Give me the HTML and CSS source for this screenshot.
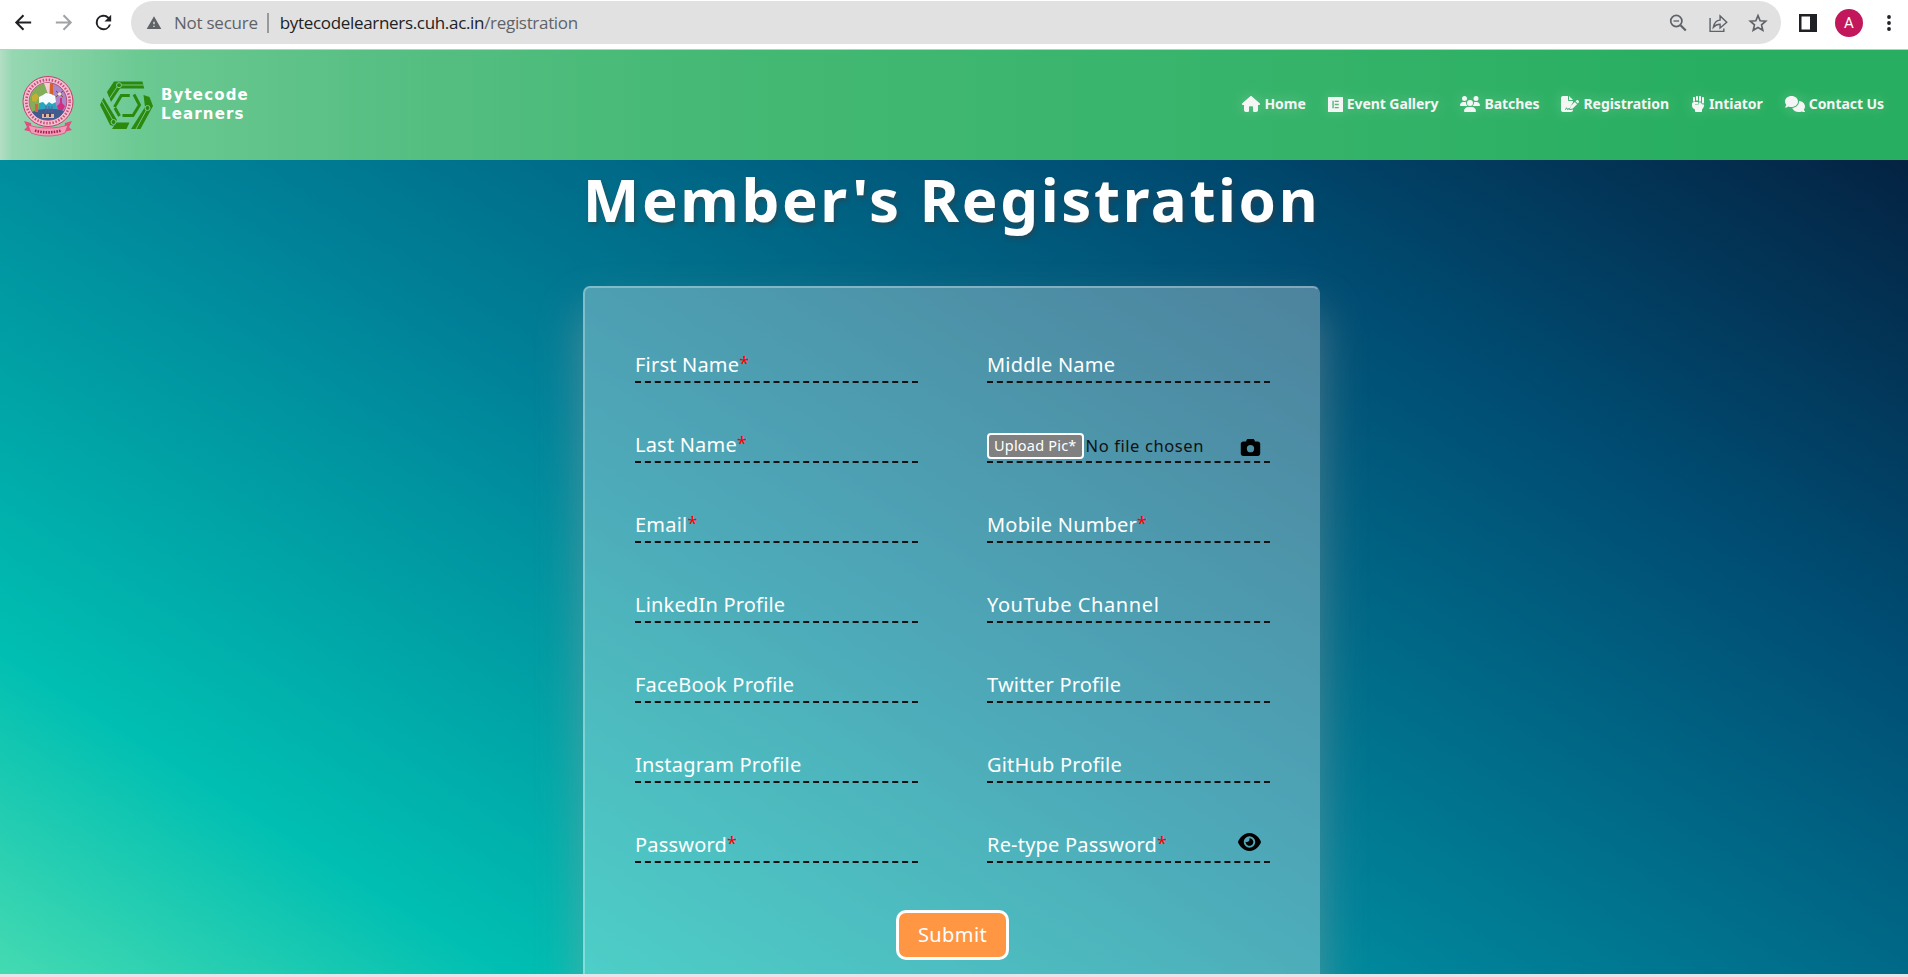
FILE: index.html
```
<!DOCTYPE html>
<html lang="en">
<head>
<meta charset="utf-8">
<title>Member's Registration</title>
<link rel="stylesheet" href="styles.css">
</head>
<body>
<header class="browser">
  <svg class="b-ico back" viewBox="0 0 24 24"><path d="M20 12H5M12 4.500L4.500 12l7.500 7.500" fill="none" stroke="#202124" stroke-width="2.100"/></svg>
  <svg class="b-ico fwd" viewBox="0 0 24 24"><path d="M4 12h15M12 4.500l7.500 7.500-7.500 7.500" fill="none" stroke="#a0a2a5" stroke-width="2.100"/></svg>
  <svg class="b-ico reload" viewBox="0 0 24 24"><path d="M17.650 6.350A8 8 0 1 0 19.730 14h-2.080A6 6 0 1 1 12 6c1.660 0 3.140.69 4.220 1.780L13 11h7V4z" fill="#202124"/></svg>
  <div class="omnibox">
    <svg class="warn" viewBox="0 0 24 24"><path fill-rule="evenodd" d="M1 21h22L12 2zm12-3h-2v-2h2zm0-4h-2v-4h2z" fill="#5f6368"/></svg>
    <span class="notsecure">Not secure</span><span class="bar"></span>
    <span class="url">bytecodelearners.cuh.ac.in<span class="path">/registration</span></span>
    <span class="grow"></span>
    <svg class="o-ico" viewBox="0 0 20 20"><g fill="none" stroke="#5f6368"><circle cx="8.300" cy="8" r="5.600" stroke-width="1.700"/><path d="M12.500 12.200l5.300 5.300" stroke-width="2.200"/><path d="M5.500 8h5.600" stroke-width="1.300"/></g></svg>
    <svg class="o-ico" viewBox="0 0 24 24"><path d="M2.500 6v16H19v-3.500M6.500 17c.8-4.500 3.500-8.500 8-8.500V3.500l8 7.500-8 7V13.500c-3.200 0-5.800 1-8 3.500z" fill="none" stroke="#5f6368" stroke-width="1.700"/></svg>
    <svg class="o-ico" viewBox="0 0 24 24"><path d="M12 3.200l2.600 6.100 6.700.6-5.050 4.400 1.500 6.500L12 17.400l-5.750 3.400 1.500-6.500L2.700 9.900l6.700-.6z" fill="none" stroke="#5f6368" stroke-width="2"/></svg>
  </div>
  <svg class="panel" viewBox="0 0 18 18"><path d="M0 0h18v18H0zM2.500 2.500v13H11v-13z" fill="#202124" fill-rule="evenodd"/></svg>
  <span class="avatar">A</span>
  <svg class="dots" viewBox="0 0 4 16"><circle cx="2" cy="2" r="1.900"/><circle cx="2" cy="8" r="1.900"/><circle cx="2" cy="14" r="1.900"/></svg>
</header>

<div class="site">
  <nav class="navbar">
    <svg class="crest" viewBox="0 0 54 62">
      <ellipse cx="26" cy="25.500" rx="25" ry="25" fill="#f3bfd0" stroke="#c43c6c" stroke-width="1"/>
      <ellipse cx="26" cy="25.500" rx="21.700" ry="21.700" fill="none" stroke="#b31e52" stroke-width="2.600" stroke-dasharray="1.500 1.600" stroke-opacity=".7"/>
      <circle cx="26" cy="25.500" r="18.800" fill="#ab86c9" stroke="#a33b6b" stroke-width=".8"/>
      <path d="M26 6.900a18.600 18.600 0 0 0-14 31l14-12z" fill="#82ad59"/>
      <path d="M22 7l5 14 1-14z" fill="#f6ccd8"/>
      <path d="M28 8h3v13h-3z" fill="#d2642b"/>
      <path d="M18 25h15l3 11H16z" fill="#28a6bd"/>
      <path d="M17 21l4-2 3-2 5 1 4 2 1 6-4 2-3-2-3 3-3-3-4 1z" fill="#f5fcff"/>
      <path d="M10 36c8-4 24-4 32-1-3 6-8 9-16 9s-13-3-16-8z" fill="#405c8e"/>
      <path d="M20 38h12v4H20z" fill="#dcb7a6"/><path d="M22 38h2v3h-2zm5-1h2v4h-2z" fill="#593d4d"/>
      <path d="M13 28h3v8h-3z" fill="#dd5d45"/><path d="M10 20l4-3 3 4-3 5-4-1z" fill="#c4ae34"/>
      <path d="M38 22h2v5l3 3-2 4h-5l-1-4 3-3z" fill="#d22d80"/><path d="M34 15l7 6m-7 0l7-6" stroke="#7d4b36"/><circle cx="37.500" cy="18" r="1.800" fill="#f1e2c8"/>
      <path d="M24 30v6m3-6v6m3-6v6" stroke="#5c58a2"/>
      <path d="M2 45l7 2 1 9-8-2 3-3zm48 0l-7 2-1 9 8-2-3-3z" fill="#e04f80"/>
      <path d="M6 49c12 4 28 4 40 0l-3 8c-10 4-24 4-34 0z" fill="#f19ab6" stroke="#d0507c" stroke-width=".8"/>
      <path d="M13 54.500c8 2.500 18 2.500 26 0" fill="none" stroke="#a31b50" stroke-width="2.600" stroke-dasharray="1.500 1.200"/>
    </svg>
    <svg class="hex" viewBox="0 0 54 49">
      <g fill="#2b8a0e">
        <path d="M14 .5h28.500l1.700 7H20L11 21 7 11z"/>
        <path d="M3.500 16.500L17 39l-4 6-3-1L0 24z"/>
        <path d="M12 48l4-6.500h13.500l-3 6.500z"/>
        <path d="M43.500 14l6 2 3.500 9-12.500 23H31l14-22z"/>
      </g>
      <path d="M22 4h21.500M2 20l11 19.500M36 48l11-20M17 6L9 18" fill="none" stroke="#7bcb99" stroke-width=".9"/>
      <g fill="none" stroke="#2b8a0e" stroke-width="3"><path d="M14.500 26l6.800-11.500h8.500M34 13.500l5.500 10.500-6.500 10.500H22.500M15 27l4.500 8"/></g>
      <g fill="#2b8a0e" stroke="#7bcb99" stroke-width="1"><circle cx="19" cy="4.200" r="2.500"/><circle cx="47.500" cy="27" r="2.500"/><circle cx="13.500" cy="41" r="2.500"/></g>
    </svg>
    <div class="brand"><div>Bytecode</div><div>Learners</div></div>
    <div class="links">
      <a class="link"><svg viewBox="0 0 576 512"><path d="M575.800 255.500c0 18-15 32.100-32 32.100h-32l.7 160.200c.2 35.500-28.500 64.300-64 64.300H392c-22 0-40-18-40-40V360c0-17.700-14.300-32-32-32h-64c-17.700 0-32 14.300-32 32v112c0 22-18 40-40 40h-56c-35.300 0-64-28.700-64-64V287.600H32c-18 0-32-14-32-32.100 0-9 3-17 10-24L266.400 8c7-7 15-8 22-8s15 2 21 7l255.400 224.500c8 7 12 15 11 24z"/></svg>Home</a>
      <a class="link"><svg class="gal" viewBox="0 0 448 448"><path fill-rule="evenodd" d="M12 0h424a12 12 0 0 1 12 12v424a12 12 0 0 1-12 12H12a12 12 0 0 1-12-12V12A12 12 0 0 1 12 0zM130 115h42v218h-42zM200 115h120v38H200zM200 205h120v38H200zM200 295h120v38H200z"/></svg>Event Gallery</a>
      <a class="link"><svg viewBox="0 0 640 512"><path d="M144 0a80 80 0 1 1 0 160A80 80 0 1 1 144 0zM512 0a80 80 0 1 1 0 160A80 80 0 1 1 512 0zM0 298.700C0 239.800 47.800 192 106.700 192h42.700c15.900 0 31 3.500 44.600 9.700A128.200 128.200 0 0 0 235.200 320H21.300C9.600 320 0 310.400 0 298.700zM405.300 320h-.7A127.800 127.800 0 0 0 446 201.700c13.600-6.300 28.700-9.700 44.600-9.700h42.700C592.200 192 640 239.800 640 298.700c0 11.800-9.600 21.300-21.300 21.300zM224 224a96 96 0 1 1 192 0 96 96 0 1 1-192 0zM128 485.300C128 411.700 187.700 352 261.300 352h117.300C452.300 352 512 411.700 512 485.300c0 14.700-11.900 26.700-26.700 26.700H154.700C140 512 128 500 128 485.300z"/></svg>Batches</a>
      <a class="link"><svg viewBox="0 0 576 512"><path fill-rule="evenodd" d="M64 0C28.700 0 0 28.700 0 64v384c0 35.300 28.700 64 64 64h256c35.300 0 64-28.700 64-64v-19l-73 18H272l-18-28-25 28h-24l-27-46-26 46h-24l34-82h27l31 49 24-32h24l8 24 17-65L384 203v-43H256c-18 0-32-14-32-32V0zM256 0v128h128zM550 140c-16-16-41-16-56 0l-30 30 71 71 30-30c15-15 15-40 0-56zM311 322c-4 4-7 9-8 15l-15 60c-3 12 8 23 20 20l60-15c5-1 11-4 15-8l130-130-71-71z"/></svg>Registration</a>
      <a class="link"><svg viewBox="0 0 448 512"><path d="M192 0c18 0 32 14 32 32v112h-64V32c0-18 14-32 32-32zM256 32c0-18 14-32 32-32s32 14 32 32v144h-64zM352 64c0-18 14-32 32-32s32 14 32 32v144c0 18-14 32-32 32s-32-14-32-32zM128 64v112H64V64c0-18 14-32 32-32s32 14 32 32zM32 256c0-35 29-64 64-64h104c22 0 40 18 40 40s-18 40-40 40h-72v16h72c31 0 56-25 56-56v-24h64v0c12 34 28 64 64 64 12 0 23-3 32-9v41c0 49-24 92-64 118v58c0 18-14 32-32 32H160c-18 0-32-14-32-32v-50c-57-24-96-67-96-126z"/></svg>Intiator</a>
      <a class="link"><svg viewBox="0 0 640 512"><path d="M208 352c115 0 208-79 208-176S323 0 208 0 0 79 0 176c0 39 15 74 39 103-3 38-18 52-34 67-5 5-6 11-4 16s8 6 14 6c38 0 73-16 97-32 29 11 62 16 96 16zM448 176c0 112-99 196-216 206 24 75 109 130 208 130 35 0 67-7 96-18 24 14 58 18 90 18 6 0 11-3 13-8s1-11-3-15c-15-15-28-34-35-56 24-28 39-63 39-101 0-94-84-168-192-176z"/></svg>Contact Us</a>
    </div>
  </nav>

  <main class="page">
    <h1>Member's Registration</h1>
    <form class="card">
      <div class="grid">
        <div class="field">First Name<i>*</i></div><div class="field">Middle Name</div>
        <div class="field">Last Name<i>*</i></div>
        <div class="field file"><span class="upload">Upload Pic*</span><span class="nofile">No file chosen</span>
          <svg class="cam" viewBox="0 0 512 448"><path fill-rule="evenodd" d="M149 33L139 64H64C29 64 0 93 0 128v256c0 35 29 64 64 64h384c35 0 64-29 64-64V128c0-35-29-64-64-64h-75l-10-31C356 13 338 0 317 0H195c-21 0-39 13-46 33zM256 160a96 96 0 1 1 0 192 96 96 0 1 1 0-192z"/></svg></div>
        <div class="field">Email<i>*</i></div><div class="field">Mobile Number<i>*</i></div>
        <div class="field">LinkedIn Profile</div><div class="field wide">YouTube Channel</div>
        <div class="field">FaceBook Profile</div><div class="field">Twitter Profile</div>
        <div class="field">Instagram Profile</div><div class="field">GitHub Profile</div>
        <div class="field">Password<i>*</i></div>
        <div class="field">Re-type Password<i>*</i>
          <svg class="eye" viewBox="0 0 576 448"><path fill-rule="evenodd" d="M288 0C207 0 143 37 96 80 49 124 18 176 3 212c-3 8-3 16 0 24 15 36 46 88 93 132 47 43 111 80 192 80s145-37 192-80c47-44 78-96 93-132 3-8 3-16 0-24-15-36-46-88-93-132C433 37 369 0 288 0zM144 224a144 144 0 1 1 288 0 144 144 0 1 1-288 0zM288 160c0 35-29 64-64 64-7 0-14-1-20-3-6-2-12 2-12 7 0 7 1 14 3 21 14 51 67 82 118 68s82-67 68-118c-11-42-48-70-89-71-5 0-9 6-7 12 2 6 3 13 3 20z"/></svg></div>
      </div>
      <button type="button" class="submit">Submit</button>
    </form>
  </main>
</div>
<div class="bottom-edge"></div>
</body>
</html>
```

FILE: styles.css
```
* { box-sizing: border-box; }
body { margin: 0; height: 977px; overflow: hidden; background: #fff; font-family: "Noto Sans", sans-serif; display: flex; flex-direction: column; }

.browser { height: 50px; flex: none; border-bottom: 1px solid #c6c8c6; display: flex; align-items: center; padding: 0 14px 4px 12px; background: #fff; }
.b-ico { width: 23px; height: 23px; flex: none; }
.fwd { margin-left: 17px; }
.reload { margin-left: 17px; }
.omnibox { flex: none; width: 1650px; height: 43px; margin-left: 16px; border-radius: 22px; background: #e1e1e1; display: flex; align-items: center; padding: 0 13px 0 15px; font-family: "Open Sans", sans-serif; font-size: 17px; color: #5f6368; }
.warn { width: 16px; height: 16px; }
.notsecure { margin-left: 12px; letter-spacing: -.25px; }
.bar { width: 2px; height: 20px; margin: 0 11px 0 9px; background: #999; }
.url { color: #202124; letter-spacing: -.32px; }
.path { color: #5f6368; }
.grow { flex: 1; }
.o-ico { width: 20px; height: 20px; margin-left: 20px; }
.panel { width: 18px; height: 18px; margin-left: 18px; flex: none; }
.avatar { width: 28px; height: 28px; border-radius: 50%; margin-left: 18px; flex: none; background: #c2185b; color: #fff; display: flex; align-items: center; justify-content: center; font: 15px Roboto, sans-serif; }
.dots { width: 4px; height: 16px; margin-left: 24px; flex: none; fill: #202124; }

.site { flex: none; height: 924px; overflow: hidden; background: linear-gradient(to left bottom, #051937, #004d73, #008299, #00bfb2, #80f2b0) 0 0 / 100% 1205px no-repeat; }
.navbar { height: 110px; display: flex; align-items: center; padding: 0 24px 0 22px; background: linear-gradient(90deg, #b3dfc5 0, #96d7b2 12px, #6bc992 140px, #57bf83 380px, #45b975 700px, #37b46b 1220px, #27ae60 1750px); }
.crest { width: 54px; height: 62px; flex: none; margin-top: 3px; }
.hex { width: 54px; height: 49px; margin: 1px 0 0 24px; flex: none; }
.brand { margin: 0 0 0 7px; color: #fff; font: 700 15px/19px "DejaVu Sans", sans-serif; letter-spacing: 1.150px; }
.links { margin: -2px 0 0 auto; display: flex; gap: 22px; }
.link { display: flex; align-items: center; gap: 4px; color: #f5f5f5; font-weight: 700; font-size: 14px; line-height: 20px; letter-spacing: -.06px; white-space: nowrap; text-shadow: 0 0 15px rgba(255,255,255,.35); }
.link svg { height: 16px; fill: #f5f5f5; filter: drop-shadow(0 0 7px rgba(255,255,255,.25)); }
.link .gal { height: 15px; }

.page { display: flex; flex-direction: column; align-items: center; padding-right: 5px; }
h1 { margin: 0; height: 126px; font-size: 60px; line-height: 78px; letter-spacing: 2.600px; color: #fff; text-shadow: 2px 3px 4px rgba(60,60,60,.5); white-space: nowrap; }
.card { width: 737px; height: 760px; border: 2px solid rgba(255,255,255,.3); border-right-color: transparent; border-radius: 7px; background: rgba(255,255,255,.3); box-shadow: 0 25px 45px rgba(160,160,160,.48); padding: 44px 48px 0 50px; display: flex; flex-direction: column; align-items: center; }
.grid { width: 100%; display: grid; grid-template-columns: 283px 283px; justify-content: space-between; grid-auto-rows: 80px; }
.field { position: relative; align-self: start; height: 51px; border-bottom: 2px dashed #111; color: #fff; font-size: 20px; line-height: 28px; padding-top: 19px; white-space: nowrap; letter-spacing: .2px; }
.wide { letter-spacing: .6px; }
.field i { color: #f00; font-style: normal; font-size: 18px; line-height: 1; position: relative; top: -2px; }
.file { display: flex; align-items: flex-start; padding-top: 21px; }
.upload { height: 26px; border: 2px solid #fff; border-radius: 4px; background: gray; padding: 0 5px; font-size: 14.500px; line-height: 21px; letter-spacing: .2px; }
.nofile { margin-left: 2px; color: #111; font-size: 16.500px; line-height: 26px; letter-spacing: .6px; }
.cam { position: absolute; right: 9px; top: 27px; width: 21px; height: 17px; }
.eye { position: absolute; right: 9px; top: 21px; width: 23px; height: 18px; }
.submit { flex: none; width: 113px; height: 50px; margin-top: 18px; border: 3px solid #fff; border-radius: 10px; background: #ff9644; color: #fff; font: 20px/28px "Noto Sans", sans-serif; letter-spacing: .4px; padding: 0; }
.bottom-edge { height: 3px; background: #e4e6ec; }
```
